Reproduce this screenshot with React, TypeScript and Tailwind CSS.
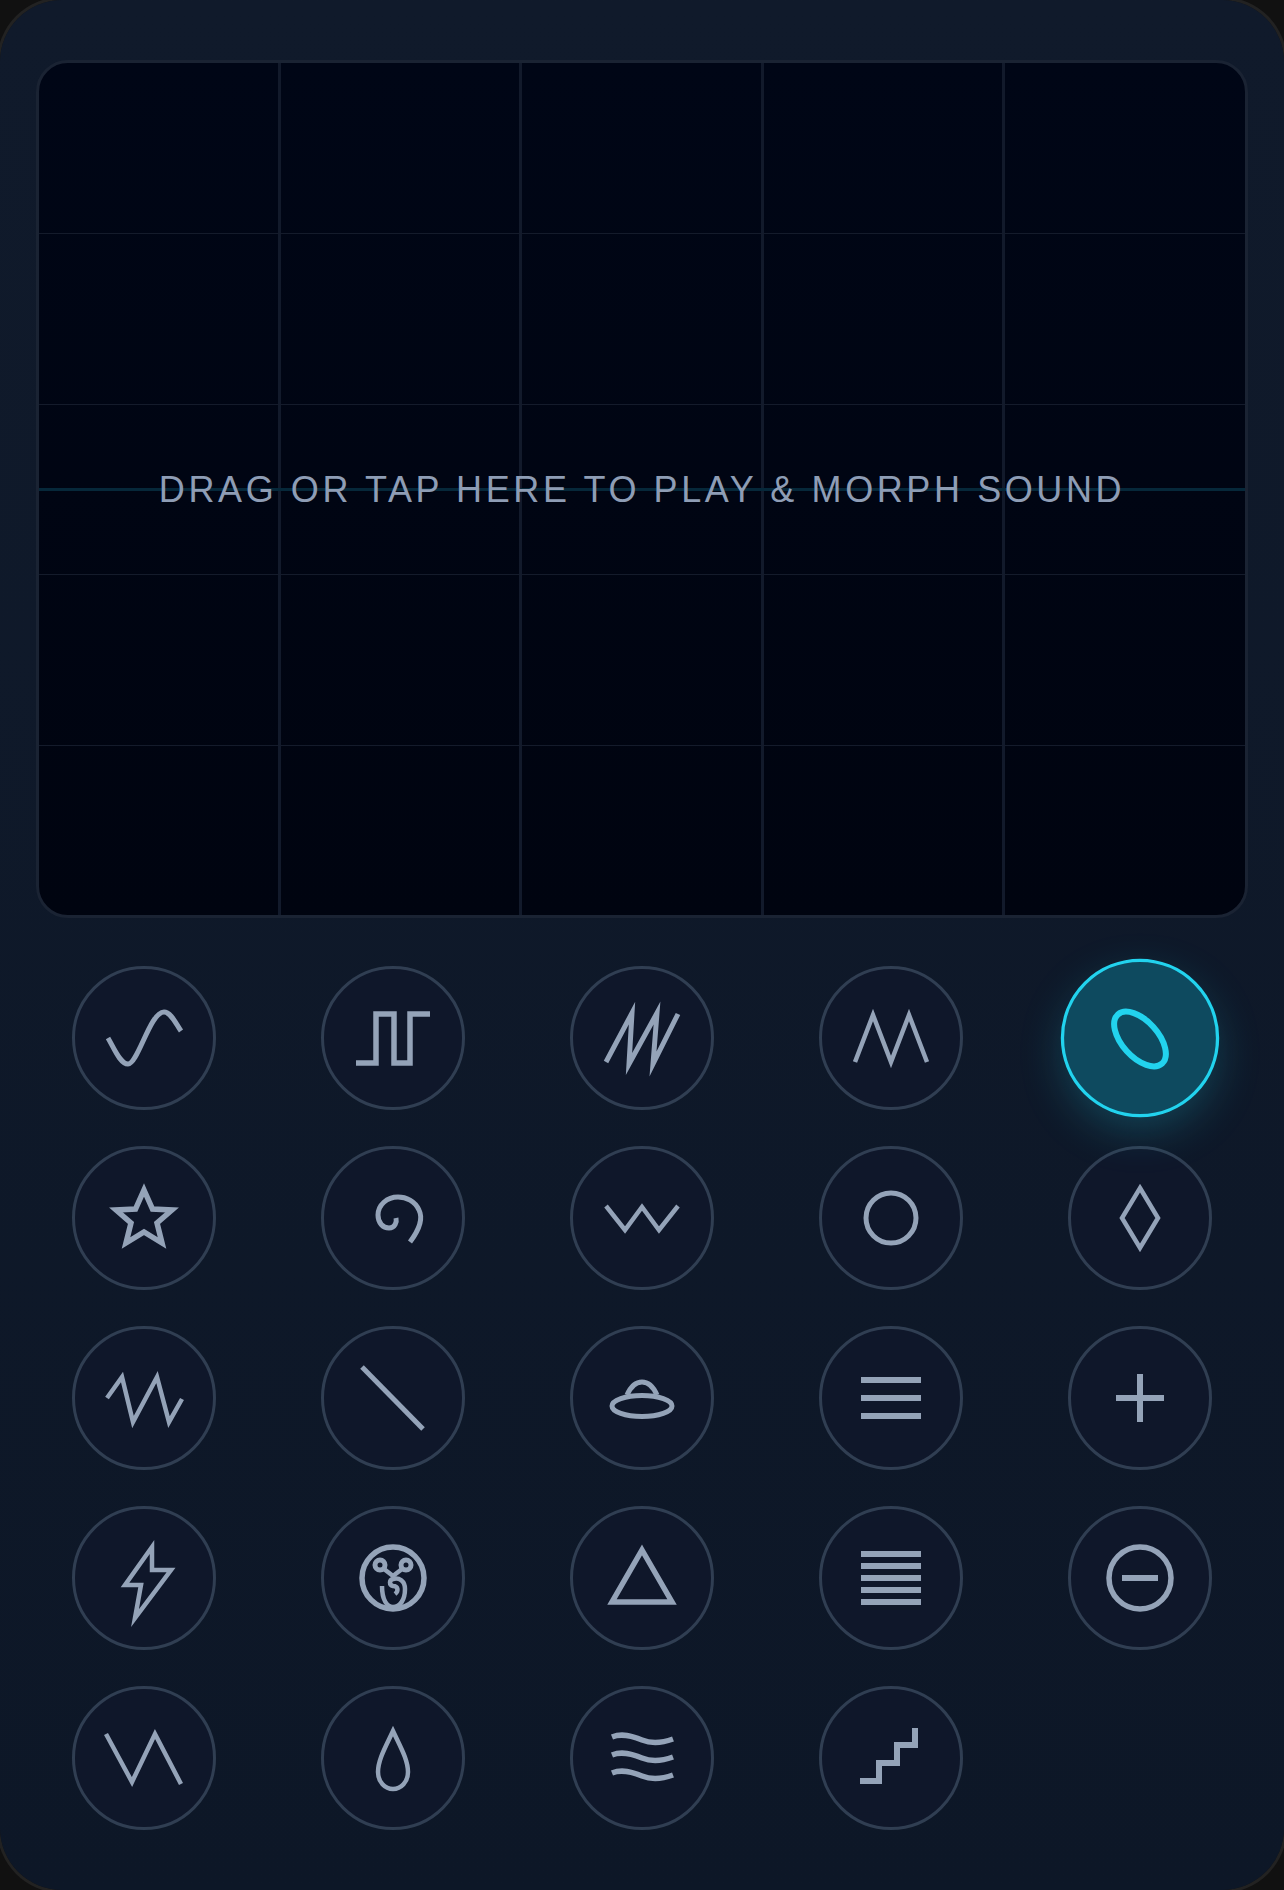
import React from 'react';

const iconLine = { fill: 'none', stroke: 'currentColor', strokeWidth: 4.5, strokeMiterlimit: 10 };

function Icon({ children }: { children: React.ReactNode }) {
  return (
    <svg viewBox="-50 -50 100 100" className="w-[100px] h-[100px] blur-[0.5px]" {...iconLine}>
      {children}
    </svg>
  );
}

const shapes: React.ReactNode[] = [
  <path d="M-36 0C-30 10-24 26-16 26C-6 26 6-26 20-26C27-26 32-14 37-7" strokeWidth={5} />,
  <path d="M-37 25H-17V-24H1V25H17V-24H37" strokeWidth={5.5} />,
  <path d="M-36 24L-10-25L-13 26L15-25L11 26L36-24" strokeWidth={5} />,
  <path d="M-36 24L-18-23L0 24L18-23L36 24" />,
  <ellipse cx="0" cy="1" rx="33" ry="18" transform="rotate(48 0 1)" strokeWidth={6} />,

  <path d="M0-28L8.5-9L28-8L13 5L18 25L0 14L-18 25L-13 5L-28-8L-8.5-9Z" strokeWidth={5.5} />,
  <path d="M17 24C26 12 30 0 26-8C22-17 13-21 5-21C-6-21-15-13-15-3C-15 5-10 10-4 10C2 10 4 4 3 0" strokeWidth={5} />,
  <path d="M-36-12L-17 12L0-11L17 12L36-12" />,
  <circle cx="0" cy="0" r="25" strokeWidth={5} />,
  <path d="M0-30L18 0L0 30L-18 0Z" />,

  <path d="M-37 0L-22-21L-11 24L13-21L25 24L38 1" />,
  <path d="M-31-31L30 31" strokeWidth={5} />,
  <>
    <ellipse cx="0" cy="8" rx="30" ry="10.5" strokeWidth={5} />
    <path d="M-15-3C-11-12-6-16 0-16C6-16 11-12 15-3" strokeWidth={5} />
  </>,
  <path d="M-30-18H30M-30 0H30M-30 18H30" strokeWidth={6} />,
  <path d="M-24 0H24M0-24V24" strokeWidth={6} />,

  <path d="M8-31L-19 7H-3L-9 40L27-8H8Z" />,
  <>
    <circle cx="0" cy="0" r="31" strokeWidth={5.5} />
    <circle cx="-13" cy="-13" r="5" strokeWidth={5} />
    <circle cx="13" cy="-13" r="5" strokeWidth={5} />
    <path d="M-9-9L0-2L9-9" />
    <path d="M-11 8C-11 22-6 29 0 29C7 29 12 22 12 11C12 3 6-1 0 1C-4 2-4 7 0 8C5 8 6 13 2 16" />
  </>,
  <path d="M0-28L30 24H-30Z" strokeWidth={5.5} />,
  <path d="M-30-24H30M-30-12H30M-30 0H30M-30 12H30M-30 24H30" strokeWidth={6} />,
  <>
    <circle cx="0" cy="0" r="31" strokeWidth={5.5} />
    <path d="M-18 0H18" strokeWidth={6} />
  </>,

  <path d="M-38-24L-12 24L11-24L37 26" />,
  <path d="M0-27C8-10 15 2 15 14C15 24 8 31 0 31C-8 31-15 24-15 14C-15 2-8-10 0-27Z" />,
  <path d="M-30-21C-20-25-10-22 0-18C10-14 20-15 31-19M-30-3C-20-7-10-4 0 0C10 4 20 3 31-1M-30 15C-20 11-10 14 0 18C10 22 20 21 31 17" strokeWidth={5.5} />,
  <path d="M-31 23H-12V5H6V-13H24V-30" strokeWidth={6} />,
];

const ACTIVE = 4;

function XYPad() {
  return (
    <div className="relative h-[858px] rounded-[32px] border-[3px] border-[#1a2333] bg-linear-to-b from-[#000616] to-[#000410] overflow-hidden flex items-center justify-center">
      <div className="absolute top-0 bottom-0 left-[1px] right-[-1px] grid grid-cols-5">
        {[0, 1, 2, 3, 4].map((c) => (
          <div key={c} className={c === 4 ? '' : 'border-r-[3px] border-[#121a2b]'} />
        ))}
      </div>
      <div className="absolute inset-0 grid grid-rows-5">
        {[0, 1, 2, 3, 4].map((r) => (
          <div key={r} className={r === 0 ? '' : 'border-t border-[#141b2b]'} />
        ))}
      </div>
      <div className="absolute inset-x-0 top-1/2 h-[3px] -mt-[1px] bg-[#06283a]" />
      <p className="relative mt-[2px] text-4xl tracking-[0.1em] text-[#8e9db5] font-['Liberation_Sans',Arial,sans-serif]">
        DRAG OR TAP HERE TO PLAY &amp; MORPH SOUND
      </p>
    </div>
  );
}

export default function App() {
  return (
    <div className="h-[1890px] w-[1284px] overflow-hidden bg-[#111111]">
      <div className="h-full rounded-[62px] bg-linear-to-b from-[#101a2b] to-[#0d1727] pt-[60px] px-[36px] shadow-[0_0_0_3px_#222222]">
        <XYPad />
        <div className="mt-[48px] grid grid-cols-5 gap-x-[33px] gap-y-[36px]">
          {shapes.map((shape, i) => (
            <div key={i} className="flex justify-center">
              <button
                className={
                  i === ACTIVE
                    ? 'w-[144px] h-[144px] rounded-full flex items-center justify-center scale-110 border-[3px] border-[#22d3ee] bg-[#0e4a5f] text-[#22d3ee] shadow-[0_14px_44px_-6px_rgba(34,211,238,0.28)]'
                    : 'w-[144px] h-[144px] rounded-full flex items-center justify-center border-[3px] border-[#303e52] bg-[#0f172a] text-[#94a3b8]'
                }
              >
                {i === ACTIVE ? <div className="scale-[0.91]"><Icon>{shape}</Icon></div> : <Icon>{shape}</Icon>}
              </button>
            </div>
          ))}
        </div>
      </div>
    </div>
  );
}
